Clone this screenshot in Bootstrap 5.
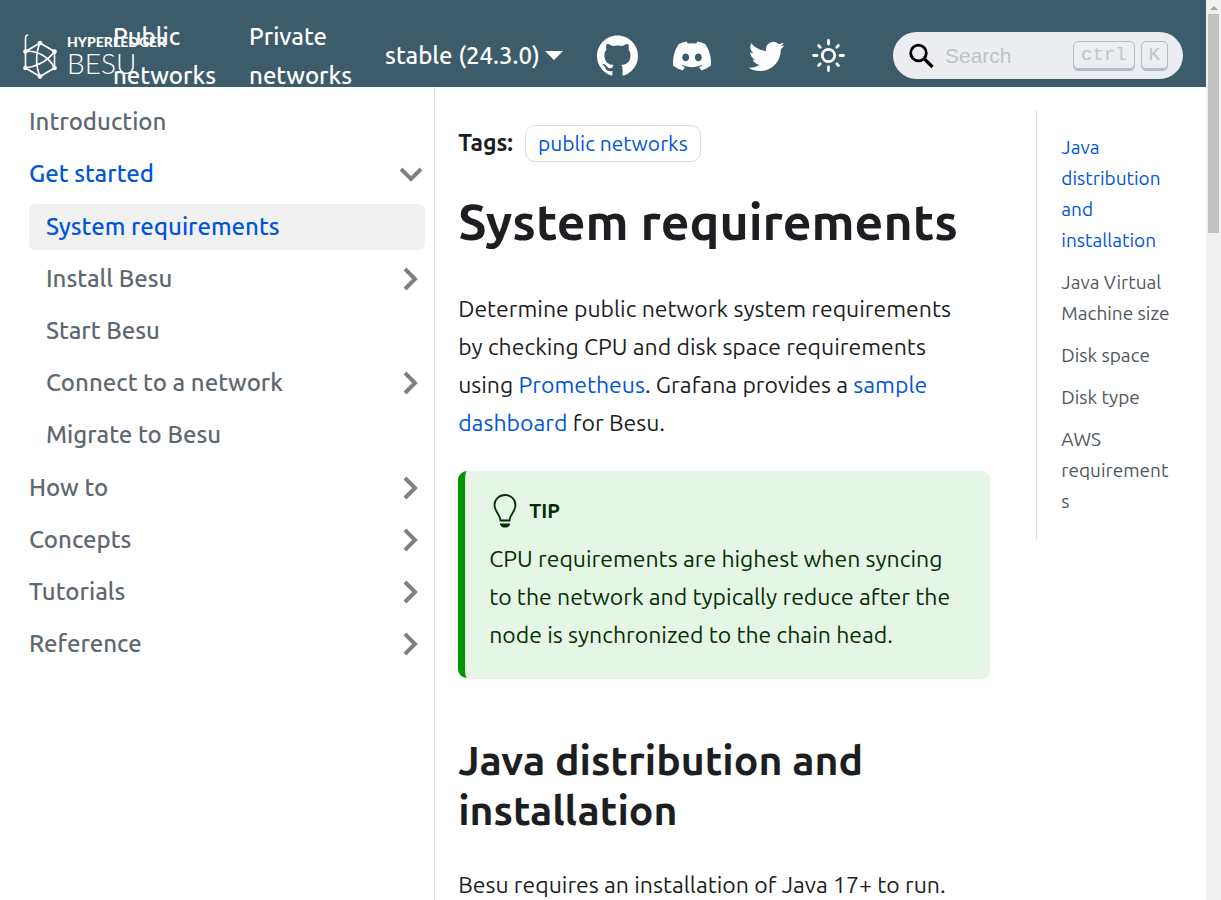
<!DOCTYPE html>
<html lang="en">
<head>
<meta charset="utf-8">
<meta name="viewport" content="width=device-width, initial-scale=1">
<title>System requirements | Hyperledger Besu</title>
<link href="https://cdn.jsdelivr.net/npm/bootstrap@5.3.0/dist/css/bootstrap.min.css" rel="stylesheet">
<style>
  :root { --brand: #0055dc; --line: #dadde1; --muted: #606770; }
  body { font-family: Ubuntu, "Noto Sans", sans-serif; font-size: 23px; line-height: 38px; color: #1c1e21; }
  a { color: var(--brand); text-decoration: none; }
  a:hover { text-decoration: underline; }

  .topbar { background: #3d5c6b; height: 87px; padding: 24px 23px 0; z-index: 2; }
  .topbar a, .version-btn { color: #fff; font-size: 24px; line-height: 39px; font-weight: 500; }
  .topbar .doc-links { gap: 33px; }
  .topbar .doc-links a { width: min-content; }
  .logo-slot { width: 90px; }
  .wordmark { left: 44px; top: 1px; white-space: nowrap; }
  .wordmark .org { font: 900 14px/16px Lato, sans-serif; }
  .wordmark .product { font: 300 28px/26px Lato, sans-serif; }
  .version-btn { background: none; border: 0; padding: 0; margin-left: 33px; gap: 5px; }
  .version-btn::after { content: ""; border: 9px solid transparent; border-top-color: #fff; border-bottom: 0; }
  .social { margin-left: 34px; gap: 35px; }
  .theme-btn { background: none; border: 0; padding: 0; margin-left: 24px; }
  .search { width: 290px; height: 47px; background: #ebedf0; border-radius: 24px; padding: 0 15px; gap: 6px; }
  .search input { border: 0; background: none; outline: 0; padding: 0; margin-left: 5px; font: 21px/30px "Liberation Sans", Arial, sans-serif; min-width: 0; }
  .search input::placeholder { color: #bdc4ca; }
  .search kbd { flex-shrink: 0; background: none; color: #bdc4ca; border: 1px solid #b4bcc4; border-radius: 5px; box-shadow: inset 0 -2px 0 #b4bcc4; font: 19px/26px "Liberation Mono", monospace; padding: 0 7px; height: 30px; }

  .side { width: 36%; padding: 12px 9px 0 12px; }
  .side ul { display: flex; flex-direction: column; gap: 6px; }
  .side ul ul { margin: 7px 0 1px 17px; }
  .side a { display: flex; align-items: center; justify-content: space-between; height: 46px; padding: 0 2px 0 17px; border-radius: 6px; color: var(--muted); font-size: 24px; font-weight: 500; }
  .side a.on { color: var(--brand); }
  .side a.here { background: #f1f1f1; }
  .side svg { fill: none; stroke: #808080; stroke-width: 4; }

  .page-body { border-left: 1px solid var(--line); }
  .doc { padding: 37px 23px 0; }
  .prose { padding-right: 16px; }
  .tag-pill { border: 1px solid var(--line); border-radius: 10px; font-size: 21px; line-height: 35px; padding: 0 12px; }
  h1 { font-size: 50px; line-height: 62px; font-weight: 700; margin: 28px 0 38px; }
  h2 { font-size: 41px; line-height: 50px; font-weight: 700; margin: 57px 0 31px; }
  .tip { background: #e5f5e6; color: #003100; border-left: 7px solid #009400; border-radius: 9px; box-shadow: 0 1px 2px rgba(0,0,0,.1); margin-top: 29px; padding: 23px 24px 24px; }
  .tip-title { font-size: 20px; line-height: 34px; margin-bottom: 12px; gap: 12px; padding-left: 4px; }

  .toc-col { padding: 23px 24px 0 23px; }
  .toc-list { border-left: 1px solid var(--line); padding: 22px 10px 23px 24px; font-size: 19px; line-height: 31px; gap: 11px; overflow-wrap: anywhere; }
  .toc-list a { color: #525860; }
  .toc-list a.on { color: var(--brand); }

  .rail { width: 15px; background: #f1f1f1; gap: 4px; padding: 6px 2px 0; }
  .rail .thumb { height: 219px; background: #c1c1c1; }
</style>
</head>
<body>
<svg width="0" height="0" class="position-absolute" aria-hidden="true">
  <symbol id="chev-r" viewBox="0 0 24 24"><path d="M6 2l10 10L6 22"/></symbol>
  <symbol id="chev-d" viewBox="0 0 24 24"><path d="M2 7l10 10L22 7"/></symbol>
</svg>
<div class="d-flex vh-100 overflow-hidden">
  <div class="d-flex flex-column flex-grow-1 overflow-hidden">
    <nav class="topbar d-flex align-items-center flex-shrink-0 position-relative" aria-label="Main">
      <a href="#" class="logo-slot position-relative flex-shrink-0" aria-label="Hyperledger Besu">
        <svg class="d-block" width="34" height="46" viewBox="0 0 34 46" fill="none" stroke="#fff" stroke-width="1.600" stroke-linecap="round">
          <path d="M17 10L31.500 18.500V35L17 43.500L2.500 35V18.500Z"/>
          <path d="M2.500 18.500V5.500Q2.500 2.500 4.500 2"/>
          <path d="M2.500 18.500C14 17 26 24 31.500 35"/>
          <path d="M2.500 35C12 34 24 29 31.500 18.500"/>
          <path d="M17 10C12.500 20 12.500 33 17 43.500"/>
          <g fill="#fff" stroke="none"><circle cx="17" cy="10" r="2.300"/><circle cx="31.500" cy="18.500" r="2.300"/><circle cx="31.500" cy="35" r="2.300"/><circle cx="17" cy="43.500" r="2.300"/><circle cx="2.500" cy="35" r="2.300"/><circle cx="2.500" cy="18.500" r="2.300"/></g>
        </svg>
        <span class="wordmark position-absolute d-flex flex-column"><span class="org">HYPERLEDGER</span><span class="product">BESU</span></span>
      </a>
      <div class="doc-links d-flex position-relative">
        <a href="#">Public networks</a>
        <a href="#">Private networks</a>
      </div>
      <button type="button" class="version-btn d-flex align-items-center text-nowrap">stable (24.3.0)</button>
      <div class="social d-flex align-items-center">
        <a href="#" aria-label="GitHub"><svg class="d-block" width="41" height="41" viewBox="0 0 24 24" fill="#fff"><path d="M12 .297c-6.630 0-12 5.373-12 12 0 5.303 3.438 9.800 8.205 11.385.6.113.82-.258.82-.577 0-.285-.01-1.040-.015-2.040-3.338.724-4.042-1.610-4.042-1.610C4.422 18.070 3.633 17.700 3.633 17.700c-1.087-.744.084-.729.084-.729 1.205.084 1.838 1.236 1.838 1.236 1.070 1.835 2.809 1.305 3.495.998.108-.776.417-1.305.76-1.605-2.665-.3-5.466-1.332-5.466-5.930 0-1.310.465-2.380 1.235-3.220-.135-.303-.54-1.523.105-3.176 0 0 1.005-.322 3.300 1.230.96-.267 1.980-.399 3-.405 1.020.006 2.040.138 3 .405 2.280-1.552 3.285-1.230 3.285-1.230.645 1.653.24 2.873.12 3.176.765.84 1.230 1.910 1.230 3.220 0 4.610-2.805 5.625-5.475 5.920.42.36.81 1.096.81 2.220 0 1.606-.015 2.896-.015 3.286 0 .315.21.69.825.57C20.565 22.092 24 17.592 24 12.297c0-6.627-5.373-12-12-12"/></svg></a>
        <a href="#" aria-label="Discord"><svg class="d-block" width="38" height="42" viewBox="0 0 24 24" fill="#fff"><path d="M20.317 4.370a19.791 19.791 0 0 0-4.885-1.515.074.074 0 0 0-.079.037c-.21.375-.444.864-.608 1.250a18.270 18.270 0 0 0-5.487 0 12.640 12.640 0 0 0-.617-1.250.077.077 0 0 0-.079-.037A19.736 19.736 0 0 0 3.677 4.370a.07.07 0 0 0-.032.027C.533 9.046-.32 13.580.099 18.057a.082.082 0 0 0 .031.057 19.900 19.900 0 0 0 5.993 3.030.078.078 0 0 0 .084-.028 14.090 14.090 0 0 0 1.226-1.994.076.076 0 0 0-.041-.106 13.107 13.107 0 0 1-1.872-.892.077.077 0 0 1-.008-.128 10.200 10.200 0 0 0 .372-.292.074.074 0 0 1 .077-.010c3.928 1.793 8.180 1.793 12.062 0a.074.074 0 0 1 .078.010c.12.098.246.198.373.292a.077.077 0 0 1-.006.127 12.299 12.299 0 0 1-1.873.892.077.077 0 0 0-.041.107c.36.698.772 1.362 1.225 1.993a.076.076 0 0 0 .084.028 19.839 19.839 0 0 0 6.002-3.030.077.077 0 0 0 .032-.054c.5-5.177-.838-9.674-3.549-13.660a.061.061 0 0 0-.031-.030zM8.020 15.330c-1.183 0-2.157-1.085-2.157-2.419 0-1.333.956-2.419 2.157-2.419 1.210 0 2.176 1.096 2.157 2.420 0 1.333-.956 2.418-2.157 2.418zm7.975 0c-1.183 0-2.157-1.085-2.157-2.419 0-1.333.955-2.419 2.157-2.419 1.210 0 2.176 1.096 2.157 2.420 0 1.333-.946 2.418-2.157 2.418z"/></svg></a>
        <a href="#" aria-label="Twitter"><svg class="d-block" width="42" height="42" viewBox="0 0 24 24" fill="#fff"><path d="M22 5.900c-.8.350-1.600.6-2.400.7.900-.55 1.550-1.350 1.850-2.350-.8.5-1.700.85-2.650 1.050A4.200 4.200 0 0 0 11.600 9.100C8.100 8.900 5 7.200 3 4.700c-1.100 1.900-.55 4.350 1.300 5.600-.7 0-1.350-.2-1.900-.5 0 2 1.400 3.800 3.350 4.200-.6.160-1.250.2-1.900.07.53 1.650 2.100 2.850 3.900 2.900A8.500 8.500 0 0 1 1.500 18.700a12 12 0 0 0 6.450 1.900c7.800 0 12.200-6.600 11.950-12.500.8-.6 1.550-1.350 2.100-2.200z"/></svg></a>
      </div>
      <button type="button" class="theme-btn" aria-label="Switch theme"><svg class="d-block" width="33" height="33" viewBox="0 0 33 33" fill="none" stroke="#fff" stroke-width="2.800" stroke-linecap="round"><circle cx="16.500" cy="16.500" r="6.200"/><path d="M16.500 1.500v3.500M16.500 28v3.500M1.500 16.500H5M28 16.500h3.500M6.600 6.600l1.600 1.600M24.800 24.800l1.600 1.600M6.600 26.400l1.600-1.600M24.800 8.200l1.600-1.600"/></svg></button>
      <label class="search d-flex align-items-center ms-auto flex-shrink-0">
        <svg class="flex-shrink-0" width="26" height="26" viewBox="0 0 26 26" fill="none" stroke="#000" stroke-width="2.800"><circle cx="10.500" cy="10" r="7.800"/><path d="M16 15.500l8.500 8.500" stroke-width="3.200"/></svg>
        <input class="flex-grow-1" type="search" placeholder="Search" aria-label="Search">
        <kbd>ctrl</kbd><kbd>K</kbd>
      </label>
    </nav>

    <div class="d-flex flex-grow-1">
      <aside class="side flex-shrink-0">
        <ul class="list-unstyled mb-0">
          <li><a href="#">Introduction</a></li>
          <li><a href="#" class="on">Get started<svg width="24" height="24"><use href="#chev-d"/></svg></a>
            <ul class="list-unstyled">
              <li><a href="#" class="on here" aria-current="page">System requirements</a></li>
              <li><a href="#">Install Besu<svg width="24" height="24"><use href="#chev-r"/></svg></a></li>
              <li><a href="#">Start Besu</a></li>
              <li><a href="#">Connect to a network<svg width="24" height="24"><use href="#chev-r"/></svg></a></li>
              <li><a href="#">Migrate to Besu</a></li>
            </ul>
          </li>
          <li><a href="#">How to<svg width="24" height="24"><use href="#chev-r"/></svg></a></li>
          <li><a href="#">Concepts<svg width="24" height="24"><use href="#chev-r"/></svg></a></li>
          <li><a href="#">Tutorials<svg width="24" height="24"><use href="#chev-r"/></svg></a></li>
          <li><a href="#">Reference<svg width="24" height="24"><use href="#chev-r"/></svg></a></li>
        </ul>
      </aside>

      <main class="page-body flex-grow-1">
        <div class="row g-0">
          <article class="doc col-9">
            <div class="d-flex align-items-center gap-2">
              <b class="me-1">Tags:</b>
              <a href="#" class="tag-pill">public networks</a>
            </div>
            <h1>System requirements</h1>
            <p class="prose mb-0">Determine public network system requirements by checking CPU and disk space requirements using <a href="#">Prometheus</a>. Grafana provides a <a href="#">sample dashboard</a> for Besu.</p>
            <div class="tip">
              <div class="tip-title d-flex align-items-center fw-bold">
                <svg width="24" height="34" viewBox="0 0 24 34" fill="none" stroke="#003100" stroke-width="1.800"><path d="M7.500 26.500C7.500 21 1.500 17.500 1.500 11a10.500 10 0 0 1 21 0C22.500 17.500 16.500 21 16.500 26.500Z"/><path d="M7 29.500h10v1q-1.500 3-3.500 3h-3q-2 0-3.500-3z" fill="#003100" stroke="none"/></svg>
                TIP
              </div>
              <p class="mb-0">CPU requirements are highest when syncing to the network and typically reduce after the node is synchronized to the chain head.</p>
            </div>
            <h2>Java distribution and installation</h2>
            <p class="mb-0">Besu requires an installation of Java 17+ to run.</p>
          </article>
          <div class="toc-col col-3">
            <ul class="toc-list list-unstyled d-flex flex-column mb-0">
              <li><a href="#" class="on">Java distribution and installation</a></li>
              <li><a href="#">Java Virtual Machine size</a></li>
              <li><a href="#">Disk space</a></li>
              <li><a href="#">Disk type</a></li>
              <li><a href="#">AWS requirements</a></li>
            </ul>
          </div>
        </div>
      </main>
    </div>
  </div>
  <div class="rail d-flex flex-column align-items-center flex-shrink-0" aria-hidden="true">
    <svg width="8" height="4" viewBox="0 0 8 4"><path d="M0 4l4-4 4 4z" fill="#a3a3a3"/></svg>
    <div class="thumb w-100"></div>
  </div>
</div>
<script src="https://cdn.jsdelivr.net/npm/bootstrap@5.3.0/dist/js/bootstrap.bundle.min.js"></script>
</body>
</html>
